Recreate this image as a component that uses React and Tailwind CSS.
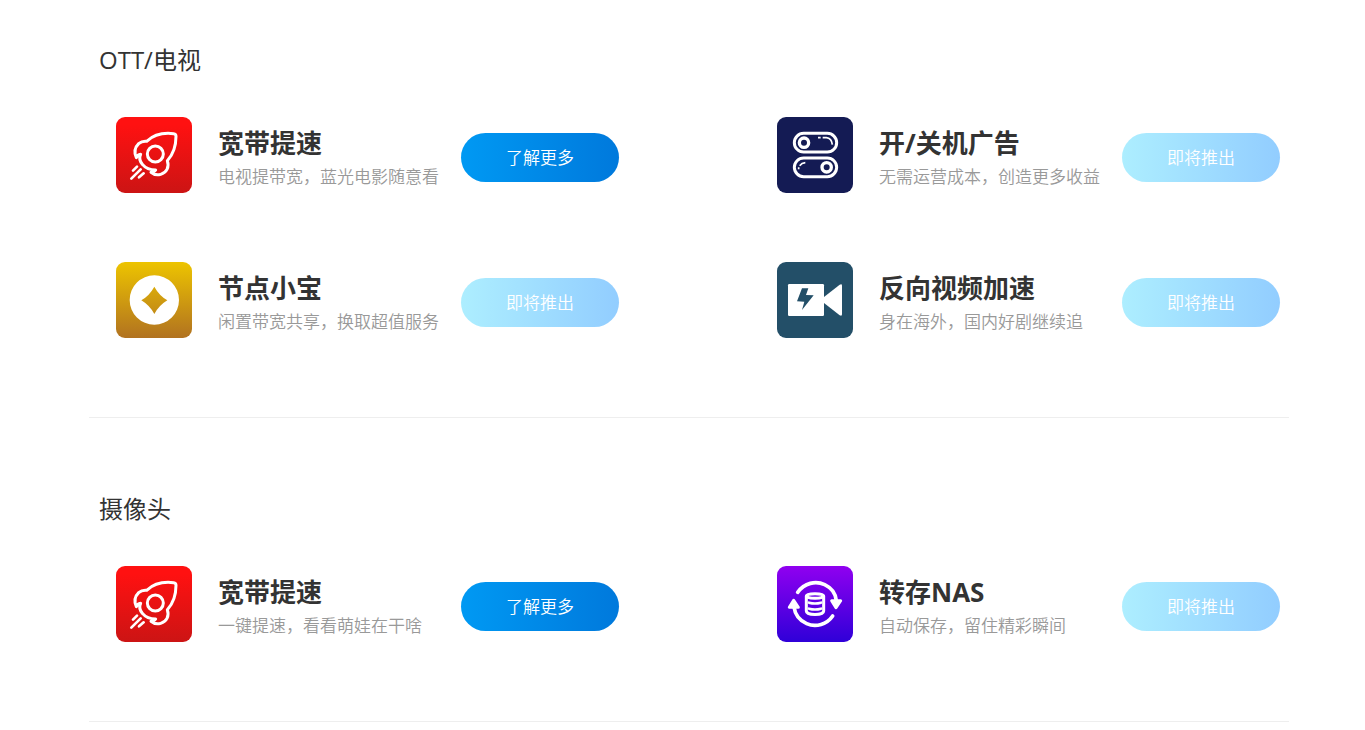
function RocketIcon() {
    return (
        <svg viewBox="30 30 228 228" className="size-[76px] shrink-0" aria-hidden="true">
            <defs>
                <linearGradient id="rocket-bg" x1="0" y1="0" x2="0" y2="1">
                    <stop offset="0.1" stopColor="#ff1111" />
                    <stop offset="1" stopColor="#cc1414" />
                </linearGradient>
            </defs>
            <rect x="30" y="30" width="228" height="228" rx="27" fill="url(#rocket-bg)" />
            <g fill="none" stroke="#fff" strokeWidth="9" strokeLinecap="round" strokeLinejoin="round">
                <path d="M122 103C140 86 170 76 203 80Q210 81 210 88C210 116 203 141 184 161C191 181 181 197 164 202C153 205 142 202 135 196C141 196 146 194 149 189C134 189 119 184 110 173C102 164 98 154 104 142C97 143 93 147 91 152C84 137 87 121 98 110C105 104 113 102 122 103Z" />
                <circle cx="148" cy="141" r="24" />
                <path d="M93 179L81 191M104 187L76 215M113 199L99 211" strokeWidth="8" />
            </g>
        </svg>
    );
}

function SwitchIcon() {
    return (
        <svg viewBox="30 30 228 228" className="size-[76px] shrink-0" aria-hidden="true">
            <rect x="30" y="30" width="228" height="228" rx="27" fill="#141b54" />
            <g fill="none" stroke="#fff">
                <rect x="82" y="79" width="127" height="56" rx="28" strokeWidth="9" />
                <rect x="82" y="153" width="127" height="56" rx="28" strokeWidth="9" />
                <circle cx="111" cy="107" r="14" strokeWidth="10" />
                <circle cx="179" cy="181" r="14" strokeWidth="10" />
                <path d="M153 92H161M167 92H178Q194 94 196 113M115 167Q104 168 98 176M95 181V187" strokeWidth="5" />
            </g>
        </svg>
    );
}

function CoinIcon() {
    return (
        <svg viewBox="30 30 228 228" className="size-[76px] shrink-0" aria-hidden="true">
            <defs>
                <linearGradient id="coin-bg" x1="0" y1="0" x2="0" y2="1">
                    <stop offset="0" stopColor="#edc400" />
                    <stop offset="1" stopColor="#b17220" />
                </linearGradient>
            </defs>
            <rect x="30" y="30" width="228" height="228" rx="27" fill="url(#coin-bg)" />
            <path
                d="M145 70A74 74 0 1 1 145 218A74 74 0 1 1 145 70ZM145 104Q159 130 184 145Q159 160 145 186Q131 160 106 145Q131 130 145 104Z"
                fill="#fff"
                fillRule="evenodd"
            />
        </svg>
    );
}

function VideoIcon() {
    return (
        <svg viewBox="30 30 228 228" className="size-[76px] shrink-0" aria-hidden="true">
            <rect x="30" y="30" width="228" height="228" rx="27" fill="#234f68" />
            <g fill="#fff">
                <rect x="63" y="96" width="108" height="96" rx="4" />
                <path d="M171 135L218 98Q225 94 225 101V187Q225 194 218 190L171 153Z" />
            </g>
            <path d="M105 109H124L117 129L140 130L105 174L112 149L90 148Z" fill="#234f68" />
        </svg>
    );
}

function NasIcon() {
    return (
        <svg viewBox="30 30 228 228" className="size-[76px] shrink-0" aria-hidden="true">
            <defs>
                <linearGradient id="nas-bg" x1="0" y1="0" x2="0" y2="1">
                    <stop offset="0" stopColor="#9000f0" />
                    <stop offset="1" stopColor="#2f00d8" />
                </linearGradient>
            </defs>
            <rect x="30" y="30" width="228" height="228" rx="27" fill="url(#nas-bg)" />
            <g fill="none" stroke="#fff" strokeWidth="11" strokeLinecap="round" strokeLinejoin="round">
                <path d="M92 109C112 81 146 73 173 86C194 96 206 113 208 134" />
                <path d="M197 180C180 205 147 215 119 203C97 193 84 175 81 153" />
            </g>
            <g fill="#fff" stroke="#fff" strokeWidth="9" strokeLinejoin="round">
                <path d="M194 134H221L207 155Z" />
                <path d="M67 154H94L80 133Z" />
            </g>
            <g fill="none" stroke="#fff" strokeWidth="9" strokeLinecap="round">
                <ellipse cx="144" cy="120" rx="26" ry="7" />
                <path d="M118 121V165C118 179 170 179 170 165V121" />
                <path d="M126 140Q144 145 162 140M126 158Q144 163 162 158" strokeWidth="8" />
            </g>
        </svg>
    );
}

const sections = [
    {
        title: "OTT/电视",
        items: [
            { icon: RocketIcon, name: "宽带提速", desc: "电视提带宽，蓝光电影随意看", ready: true },
            { icon: SwitchIcon, name: "开/关机广告", desc: "无需运营成本，创造更多收益" },
            { icon: CoinIcon, name: "节点小宝", desc: "闲置带宽共享，换取超值服务" },
            { icon: VideoIcon, name: "反向视频加速", desc: "身在海外，国内好剧继续追" },
        ],
    },
    {
        title: "摄像头",
        items: [
            { icon: RocketIcon, name: "宽带提速", desc: "一键提速，看看萌娃在干啥", ready: true },
            { icon: NasIcon, name: "转存NAS", desc: "自动保存，留住精彩瞬间" },
        ],
    },
];

function Product({ item }) {
    const Icon = item.icon;
    return (
        <li className="flex items-start">
            <Icon />
            <div className="ml-[26px] pt-[9px] whitespace-nowrap">
                <h3 className="text-[26px] leading-[35px] font-bold text-[#333]">{item.name}</h3>
                <p className="text-[17px] leading-8 font-[350] text-[#999]">{item.desc}</p>
            </div>
            {item.ready ? (
                <button
                    type="button"
                    className="mt-4 ml-auto h-[49px] w-[158px] shrink-0 cursor-pointer rounded-full bg-linear-to-r from-[#0099f3] to-[#0079dc] text-[17px] font-[350] text-white"
                >
                    了解更多
                </button>
            ) : (
                <button
                    type="button"
                    disabled
                    className="mt-4 ml-auto h-[49px] w-[158px] shrink-0 rounded-full bg-linear-to-r from-[#adeeff] to-[#92cdff] text-[17px] font-[350] text-white"
                >
                    即将推出
                </button>
            )}
        </li>
    );
}

export default function App() {
    return (
        <main className="bg-white pl-[13px] font-['Open_Sans','Noto_Sans_CJK_SC',sans-serif]">
            <div className="mx-auto max-w-[1200px]">
                {sections.map((section) => (
                    <section key={section.title} className="border-b border-[#eee] pt-[73px] pb-[79px] first:pt-[42px]">
                        <h2 className="mb-[39px] pl-[10px] text-2xl leading-9 text-[#333]">{section.title}</h2>
                        <ul className="grid grid-cols-1 gap-x-[158px] gap-y-[69px] pr-[9px] pl-[27px] lg:grid-cols-2">
                            {section.items.map((item) => (
                                <Product key={item.name} item={item} />
                            ))}
                        </ul>
                    </section>
                ))}
            </div>
        </main>
    );
}
